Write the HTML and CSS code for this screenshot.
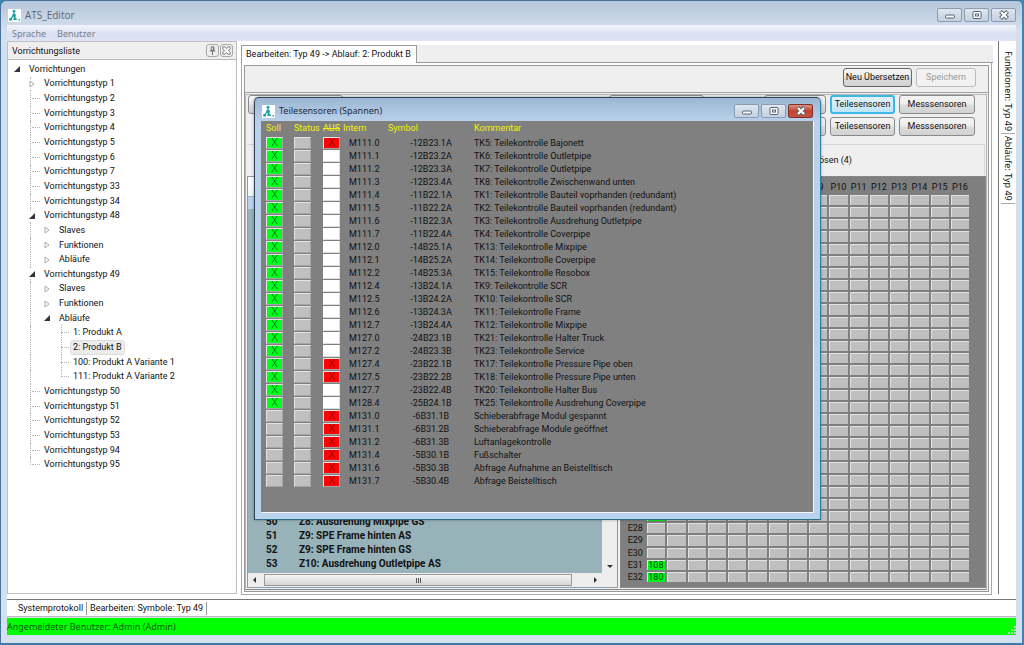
FILE: index.html
```html
<!DOCTYPE html>
<html lang="de">
<head>
<meta charset="utf-8">
<title>ATS_Editor</title>
<link rel="stylesheet" href="styles.css">
</head>
<body>
<svg class="defs" aria-hidden="true">
  <symbol id="logo" viewBox="0 0 13 13"><rect width="13" height="13" fill="#fff"/><g fill="#1fa3a8"><circle cx="6" cy="2.2" r="1.4"/><circle cx="6" cy="6.4" r="1.9"/><circle cx="2.6" cy="10.2" r="1.5"/><path d="M3 9.5 6 6M6 2v5" stroke="#1fa3a8" stroke-width="1.2"/><path d="M6.5 7 9.5 11H5z"/><circle cx="11.3" cy="10.8" r=".9"/></g></symbol>
  <symbol id="min" viewBox="0 0 12 10"><rect x="1.5" y="5" width="9" height="3" rx="1" fill="#fff" stroke="#596372"/></symbol>
  <symbol id="max" viewBox="0 0 12 10"><rect x="2" y="1.5" width="8" height="7" rx="1" fill="#fff" stroke="#596372"/><rect x="4.5" y="4" width="3" height="2" fill="#fff" stroke="#596372"/></symbol>
  <symbol id="close" viewBox="0 0 12 10"><path d="M2.500 1.500l7 7M9.500 1.500l-7 7" stroke="#596372" stroke-width="4"/><path d="M3 2l6 6M9 2L3 8" stroke="#fff" stroke-width="2.2"/></symbol>
</svg>
<div class="window">
  <header class="titlebar">
    <svg class="logo"><use href="#logo"/></svg>
    <h1 class="title">ATS_Editor</h1>
    <div class="winbtns">
      <button class="winbtn" aria-label="Minimieren"><svg><use href="#min"/></svg></button>
      <button class="winbtn" aria-label="Maximieren"><svg><use href="#max"/></svg></button>
      <button class="winbtn" aria-label="Schließen"><svg><use href="#close"/></svg></button>
    </div>
  </header>
  <nav class="menubar"><button class="menu">Sprache</button><button class="menu">Benutzer</button></nav>

  <main class="workspace">
    <aside class="dock">
      <div class="dock-head">
        <h2 class="dock-title">Vorrichtungsliste</h2>
        <button class="dock-btn" aria-label="Anheften"><svg viewBox="0 0 12 12"><path d="M4.5 2h3v4h-3zM3 6.5h6M6 7v4" fill="none" stroke="#666"/><path d="M7 2v4" stroke="#666"/></svg></button>
        <button class="dock-btn" aria-label="Schließen"><svg viewBox="0 0 12 12"><path d="M2 2h2.500L6 4l1.500-2H10v2.500L8 6l2 1.500V10H7.500L6 8l-1.500 2H2V7.500L4 6 2 4.500z" fill="#fff" stroke="#777"/></svg></button>
      </div>
      <ul class="tree" id="tree"></ul>
    </aside>

    <section class="editor">
      <div class="tabs"><button class="tab">Bearbeiten: Typ 49 -&gt; Ablauf: 2: Produkt B</button></div>
      <div class="page">
        <div class="inner">
          <div class="toolbar">
            <button class="btn btn-wide">Neu Übersetzen</button>
            <button class="btn btn-save" disabled>Speichern</button>
          </div>
          <div class="body">
            <div class="actions">
              <button class="btn first" aria-label="Ablauf"></button>
              <button class="btn second" aria-label="Spannen"></button>
              <button class="btn third" aria-label="Sensoren"></button>
              <button class="btn part active">Teilesensoren</button>
              <button class="btn meas">Messsensoren</button>
            </div>
            <div class="actions">
              <button class="btn third" aria-label="Sensoren"></button>
              <button class="btn part">Teilesensoren</button>
              <button class="btn meas">Messsensoren</button>
            </div>
            <div class="modes"><label class="mode">Lösen (4)</label></div>
            <div class="split">
              <div class="steps">
                <div class="steps-head"></div>
                <div class="steps-sel"></div>
                <div class="steps-view">
                  <table class="steplist">
                    <tr><td>50</td><td>Z8: Ausdrehung Mixpipe GS</td></tr>
                    <tr><td>51</td><td>Z9: SPE Frame hinten AS</td></tr>
                    <tr><td>52</td><td>Z9: SPE Frame hinten GS</td></tr>
                    <tr><td>53</td><td>Z10: Ausdrehung Outletpipe AS</td></tr>
                  </table>
                  <div class="vscroll"><i class="arrow down"></i></div>
                </div>
                <div class="hscroll"><i class="arrow left"></i><div class="thumb"><i></i><i></i><i></i></div><i class="arrow right"></i></div>
              </div>
              <div class="matrix-box"><table class="matrix" id="matrix"></table></div>
            </div>
          </div>
        </div>
      </div>
    </section>

    <aside class="sidetabs"><button class="sidetab">Funktionen: Typ 49</button><button class="sidetab">Abläufe: Typ 49</button></aside>
  </main>

  <div class="bottomtabs"><button class="bottomtab">Systemprotokoll</button><button class="bottomtab">Bearbeiten: Symbole: Typ 49</button></div>
  <footer class="status">Angemeldeter Benutzer: Admin (Admin)<svg class="grip" viewBox="0 0 9 9"><path d="M7 1h2M7 4h2M4 4h2M7 7h2M4 7h2M1 7h2" stroke="#9fe89f" stroke-width="2"/></svg></footer>
</div>

<section class="dialog" role="dialog" aria-labelledby="dlg-title">
  <header class="dlg-bar">
    <svg class="logo"><use href="#logo"/></svg>
    <h2 class="dlg-title" id="dlg-title">Teilesensoren (Spannen)</h2>
    <div class="winbtns">
      <button class="winbtn" aria-label="Minimieren"><svg><use href="#min"/></svg></button>
      <button class="winbtn" aria-label="Maximieren"><svg><use href="#max"/></svg></button>
      <button class="winbtn danger" aria-label="Schließen"><svg><use href="#close"/></svg></button>
    </div>
  </header>
  <div class="dlg-body">
    <table class="sensors">
      <thead><tr><th class="c-soll">Soll</th><th class="c-status">Status</th><th class="c-aus"><s>AUS</s></th><th class="c-intern">Intern</th><th class="c-symbol">Symbol</th><th>Kommentar</th></tr></thead>
      <tbody id="sensors"></tbody>
    </table>
  </div>
</section>
<script src="app.js"></script>
</body>
</html>
```
FILE: styles.css
```css
* { box-sizing: border-box; }
body {
  margin: 0;
  height: 100vh;
  background: #3f86b8;
  color: #111;
  font: 9px/13px Roboto, "Liberation Sans", Arial, sans-serif;
}
button { font: inherit; color: inherit; margin: 0; padding: 0; border: 0; background: none; white-space: nowrap; }
h1, h2 { margin: 0; font-weight: normal; }
table { border-collapse: collapse; }
td, th { padding: 0; text-align: left; }
th { font-weight: normal; }
.defs { position: absolute; width: 0; height: 0; }

.window {
  height: 100vh;
  display: flex;
  flex-direction: column;
  padding: 2px 6px 8px 6px;
  border: 1px solid #47729c;
  border-right: 2px solid #3a86bb;
  border-bottom: 2px solid #3f7cab;
  border-radius: 6px 6px 0 0;
  background: linear-gradient(#b4c6da, #d5e0ee 30px, #d3e0ef);
}
.titlebar { display: flex; align-items: center; height: 22px; flex: none; padding-top: 2px; }
.logo { width: 13px; height: 13px; flex: none; margin-left: 1px; }
.title { flex: 1; margin-left: 4px; color: #5c6470; font: 10px/14px "Open Sans", sans-serif; }
.winbtns { display: flex; gap: 2px; }
.winbtn {
  width: 25px; height: 14px;
  display: flex; align-items: center; justify-content: center;
  border: 1px solid #8b9bb0; border-radius: 2px;
  background: linear-gradient(#dfe7f1, #c3d0df);
}
.winbtn svg { width: 12px; height: 10px; }
.menubar { display: flex; gap: 11px; height: 16px; flex: none; padding-left: 5px; background: linear-gradient(#f2f5fb, #d8dff0 60%, #dfe5f4); }
.menu { color: #7d818b; font: 9px/15px "Noto Sans", sans-serif; }

.workspace { flex: 1; min-height: 0; display: flex; background: #fff; }
.dock { width: 230px; flex: none; display: flex; flex-direction: column; border: 1px solid #c0c0c0; margin: 0 0 5px; }
.dock-head { display: flex; align-items: center; gap: 1px; height: 18px; flex: none; padding: 0 3px 0 4px; background: #efefef; border-bottom: 1px solid #b8b8b8; }
.dock-title { flex: 1; font: 9px/14px Roboto, sans-serif; }
.dock-btn { width: 13px; height: 13px; border: 1px solid #aaa; border-radius: 3px; display: flex; }
.dock-btn svg { width: 11px; height: 11px; }
.tree { list-style: none; margin: 2px 0 0; padding: 0; height: 410px; display: grid; grid-auto-rows: 1fr; }
.node { display: flex; align-items: center; position: relative; }
.node::before { content: ""; position: absolute; left: 22px; top: 0; bottom: 0; border-left: 1px dotted #b5b5b5; }
.l0::before { display: none; }
.node.last::before { bottom: 50%; }
.mark { width: 14px; height: 10px; flex: none; position: relative; background: #fff; }
.mark svg { width: 8px; height: 8px; display: block; margin: 1px 0 0 0; }
.mark.stub { background: none; border-top: 1px dotted #b5b5b5; height: 1px; width: 8px; margin: 0 2px 0 4px; }
.l0 { padding-left: 5px; }
.l1 { padding-left: 20px; }
.l2 { padding-left: 35px; }
.l3 { padding-left: 49px; }
.l3 .mark::before { content: ""; position: absolute; left: 0; top: -8px; height: 15px; border-left: 1px dotted #b5b5b5; }
.l3.end .mark::before { height: 8px; }
.name { padding: 0 2px; line-height: 13px; }
.name.sel { background: #ececec; outline: 1px solid #ddd; border-radius: 2px; }

.editor { flex: 1; min-width: 0; display: flex; flex-direction: column; margin: 4px 4px 4px 4px; }
.tabs { height: 18px; flex: none; background: #efefef; border-bottom: 1px solid #9a9a9a; display: flex; margin-right: 1px; }
.tab { background: #fff; border: 1px solid #9a9a9a; border-bottom: 0; padding: 0 5px 0 4px; height: 18px; font: 9px/15px Roboto, sans-serif; }
.page { flex: 1; min-height: 0; display: flex; border: 1px solid #a8a8a8; border-top: 0; padding: 2px; margin-right: 2px; }
.inner { flex: 1; min-width: 0; display: flex; flex-direction: column; border: 1px solid #999; background: #efefef; }
.toolbar { height: 27px; flex: none; display: flex; justify-content: flex-end; gap: 4px; padding: 2px 12px 0 0; border-bottom: 1px solid #a0a0a0; }
.btn { height: 19px; border: 1px solid #8a8a8a; border-radius: 3px; background: linear-gradient(#f4f4f4, #ececec 48%, #dcdcdc 52%, #d2d2d2); text-align: center; flex: none; }
.btn-wide { width: 69px; border-color: #666; }
.btn-save { width: 60px; }
.btn:disabled { background: #f2f2f2; color: #9a9a9a; border-color: #bbb; }
.active { border: 2px solid #3cb8e6; background: linear-gradient(#e2f3fc, #c0e5f8); line-height: 15px; }
.body { flex: 1; min-height: 0; display: flex; flex-direction: column; margin: 1px 1px 1px 0; padding: 0 0 1px 1px; border: 1px solid #b5b5b5; border-bottom-color: #888; }
.actions { height: 22px; flex: none; display: flex; justify-content: flex-end; gap: 4px; padding-right: 11px; }
.first { width: 95px; margin-right: auto; margin-left: 1px; }
.second { width: 95px; margin-right: 56px; }
.third { width: 62px; }
.part { width: 65px; }
.meas { width: 76px; }
.modes { flex: none; height: 31px; margin: 5px 1px 0 0; border-top: 1px solid #d8d8d8; border-right: 1px solid #d8d8d8; display: flex; align-items: center; justify-content: flex-end; padding-right: 132px; }
.split { flex: 1; min-height: 0; display: flex; gap: 2px; margin-top: 1px; }
.steps { flex: 1; min-width: 0; display: flex; flex-direction: column; border: 1px solid #8d9da5; background: #97b2b8; }
.steps-head { height: 20px; flex: none; background: linear-gradient(#fff, #f1f3f6); border-bottom: 1px solid #9ab6cf; }
.steps-sel { height: 12px; flex: none; background: #b9d3ee; }
.steps-view { flex: 1; min-height: 0; display: flex; align-items: stretch; }
.steplist { flex: 1; align-self: flex-end; font: bold 10px/14px Roboto, "Liberation Sans", Arial, sans-serif; margin-bottom: 2px; }
.steplist td { height: 14px; }
.steplist td:first-child { width: 51px; padding-left: 18px; }
.vscroll { width: 15px; background: #ededed; display: flex; align-items: flex-end; justify-content: center; padding-bottom: 5px; }
.hscroll { height: 14px; flex: none; background: #ededed; display: flex; align-items: center; padding: 0 20px 0 5px; }
.thumb { flex: 1; height: 12px; margin: 0 22px 0 8px; border: 1px solid #999; background: linear-gradient(#f5f5f5, #d5d5d5); display: flex; align-items: center; justify-content: center; gap: 1px; }
.thumb i { width: 1px; height: 5px; background: #555; }
.arrow { width: 0; height: 0; border: 3px solid transparent; }
.down { border-top-color: #333; border-bottom: 0; }
.left { border-right-color: #333; border-left: 0; }
.right { border-left-color: #333; border-right: 0; }
.matrix-box { width: 366px; flex: none; display: flex; background: #7f7f7f; border: 1px solid #888; padding: 3px 14px 3px 0; }
.matrix { width: 350px; height: 100%; table-layout: fixed; line-height: 8px; }
.matrix th { text-align: center; }
.matrix tr > :first-child { width: 25px; padding-left: 4px; }
.matrix thead th { height: 14px; }
.matrix tbody th, .matrix td { height: 12px; vertical-align: middle; }
.matrix td { background: #bfbfbf; border: 2px solid #7f7f7f; border-top-width: 1px; border-left-width: 1px; box-shadow: inset 1px 1px #e2e2e2; text-align: center; }
.matrix td.on { background: #00f21b; color: #0b4a0b; }

.sidetabs { width: 18px; flex: none; display: flex; flex-direction: column; align-items: center; border-left: 1px solid #777; margin: 0 0 5px; padding-top: 8px; }
.sidetab { writing-mode: vertical-rl; border-bottom: 1px solid #aaa; padding: 2px 0 2px; font: 9px/14px "Noto Sans", sans-serif; }

.bottomtabs { height: 18px; flex: none; background: #fff; border-top: 1px solid #777; display: flex; align-items: center; padding-left: 8px; border-bottom: 1px solid #bbb; }
.bottomtab { padding: 0 3px; border-right: 1px solid #999; font: 9px/13px Roboto, sans-serif; }
.status { height: 17px; flex: none; display: flex; justify-content: space-between; align-items: center; background: #00ff00; color: #0a5a0a; margin-top: 1px; padding-top: 1px; font: 9px/14px "Noto Sans", sans-serif; }
.grip { width: 9px; height: 9px; align-self: flex-end; }

.dialog {
  position: absolute; left: 254px; top: 97px; width: 567px;
  border: 1px solid #2f4358; border-right-color: #2d7f9b; border-bottom-color: #2d6f85;
  border-radius: 5px 5px 0 0;
  background: linear-gradient(#9db6d3, #b9d1ea 24px, #b9d3ec);
  padding: 0 6px 6px;
  box-shadow: 0 0 3px rgba(0, 0, 0, .35);
}
.dlg-bar { display: flex; align-items: center; height: 23px; padding: 3px 1px 0 0; }
.dlg-title { flex: 1; margin-left: 4px; color: #1d2b3c; font: 9px/14px "Noto Sans", sans-serif; }
.danger { background: linear-gradient(#dd9484, #c4412d 50%, #c95140); border-color: #7d3029; }
.dlg-body { background: #808080; border-right: 1px solid #f4f4f4; border-bottom: 1px solid #f4f4f4; padding: 0 0 25px 5px; }
.sensors { width: 100%; table-layout: fixed; }
.sensors th { color: #f2f200; height: 15px; line-height: 13px; white-space: nowrap; }
.sensors td { height: 13px; line-height: 12px; white-space: nowrap; }
.c-soll { width: 28px; }
.c-status { width: 29px; }
.c-aus { width: 20px; }
.c-intern { width: 45px; }
.c-symbol { width: 86px; }
.sensors td:nth-child(4) { padding-left: 6px; }
.sensors td:nth-child(5) { text-align: center; }
.cell { display: block; width: 17px; height: 12px; background: #c0c0c0; border: 1px solid #e4e4e4; border-right-color: #a4a4a4; border-bottom-color: #a4a4a4; font-size: 11px; font-weight: 300; line-height: 10px; text-align: center; }
.cell.green { background: #00ff1e; color: #0c5c0c; }
.cell.red { background: #f90606; color: #7c0000; }
.cell.white { background: #fff; border-color: #fff #ddd #ddd #fff; }
```
FILE: app.js
```js
const tree = [
  [0, "Vorrichtungen", "open"], [1, "Vorrichtungstyp 1", "closed"],
  ...["2", "3", "4", "5", "6", "7", "33", "34"].map(n => [1, "Vorrichtungstyp " + n]),
  [1, "Vorrichtungstyp 48", "open"], [2, "Slaves", "closed"], [2, "Funktionen", "closed"], [2, "Abläufe", "closed"],
  [1, "Vorrichtungstyp 49", "open"], [2, "Slaves", "closed"], [2, "Funktionen", "closed"], [2, "Abläufe", "open"],
  [3, "1: Produkt A"], [3, "2: Produkt B", "", "sel"], [3, "100: Produkt A Variante 1"], [3, "111: Produkt A Variante 2", "", "", "end"],
  ...["50", "51", "52", "53", "94"].map(n => [1, "Vorrichtungstyp " + n]),
  [1, "Vorrichtungstyp 95", "", "", "last"]
];
const marks = {
  open: '<svg viewBox="0 0 8 8"><path d="M7 1v6H1z" fill="#333"/></svg>',
  closed: '<svg viewBox="0 0 8 8"><path d="M2 1l4 3-4 3z" fill="#fff" stroke="#aaa"/></svg>'
};
document.getElementById("tree").innerHTML = tree.map(([level, text, state, sel, pos]) =>
  `<li class="node l${level} ${pos || ""}"><span class="mark ${state ? "" : "stub"}">${marks[state] || ""}</span><span class="name ${sel || ""}">${text}</span></li>`
).join("");

const values = { 27: "", 31: "108", 32: "180" };
let m = "<thead><tr><th></th>";
for (let p = 1; p <= 16; p++) m += `<th>P${p}</th>`;
m += "</tr></thead><tbody>";
for (let e = 1; e <= 32; e++) {
  m += `<tr><th>E${e}</th>`;
  for (let p = 1; p <= 16; p++) m += p === 1 && e in values ? `<td class="on">${values[e]}</td>` : "<td></td>";
  m += "</tr>";
}
document.getElementById("matrix").innerHTML = m + "</tbody>";

const sensors = [
  "M111.0|-12B23.1A|TK5: Teilekontrolle Bajonett|GR", "M111.1|-12B23.2A|TK6: Teilekontrolle Outletpipe|G",
  "M111.2|-12B23.3A|TK7: Teilekontrolle Outletpipe|G", "M111.3|-12B23.4A|TK8: Teilekontrolle Zwischenwand unten|G",
  "M111.4|-11B22.1A|TK1: Teilekontrolle Bauteil voprhanden (redundant)|G", "M111.5|-11B22.2A|TK2: Teilekontrolle Bauteil voprhanden (redundant)|G",
  "M111.6|-11B22.3A|TK3: Teilekontrolle Ausdrehung Outletpipe|G", "M111.7|-11B22.4A|TK4: Teilekontrolle Coverpipe|G",
  "M112.0|-14B25.1A|TK13: Teilekontrolle Mixpipe|G", "M112.1|-14B25.2A|TK14: Teilekontrolle Coverpipe|G",
  "M112.2|-14B25.3A|TK15: Teilekontrolle Resobox|G", "M112.4|-13B24.1A|TK9: Teilekontrolle SCR|G",
  "M112.5|-13B24.2A|TK10: Teilekontrolle SCR|G", "M112.6|-13B24.3A|TK11: Teilekontrolle Frame|G",
  "M112.7|-13B24.4A|TK12: Teilekontrolle Mixpipe|G", "M127.0|-24B23.1B|TK21: Teilekontrolle Halter Truck|G",
  "M127.2|-24B23.3B|TK23: Teilekontrolle Service|G", "M127.4|-23B22.1B|TK17: Teilekontrolle Pressure Pipe oben|GR",
  "M127.5|-23B22.2B|TK18: Teilekontrolle Pressure Pipe unten|GR", "M127.7|-23B22.4B|TK20: Teilekontrolle Halter Bus|G",
  "M128.4|-25B24.1B|TK25: Teilekontrolle Ausdrehung Coverpipe|G", "M131.0|-6B31.1B|Schieberabfrage Modul gespannt|R",
  "M131.1|-6B31.2B|Schieberabfrage Module geöffnet|R", "M131.2|-6B31.3B|Luftanlagekontrolle|R",
  "M131.4|-5B30.1B|Fußschalter|R", "M131.6|-5B30.3B|Abfrage Aufnahme an Beistelltisch|R", "M131.7|-5B30.4B|Abfrage Beistelltisch|R"
];
document.getElementById("sensors").innerHTML = sensors.map(line => {
  const [intern, symbol, text, flags] = line.split("|");
  const g = flags.includes("G"), r = flags.includes("R");
  return `<tr><td><button class="cell ${g ? "green" : ""}" aria-label="Soll ${intern}">${g ? "X" : ""}</button></td>` +
    `<td><button class="cell" aria-label="Status ${intern}"></button></td>` +
    `<td><button class="cell ${r ? "red" : "white"}" aria-label="Aus ${intern}">${r ? "X" : ""}</button></td>` +
    `<td>${intern}</td><td>${symbol}</td><td>${text}</td></tr>`;
}).join("");
```
